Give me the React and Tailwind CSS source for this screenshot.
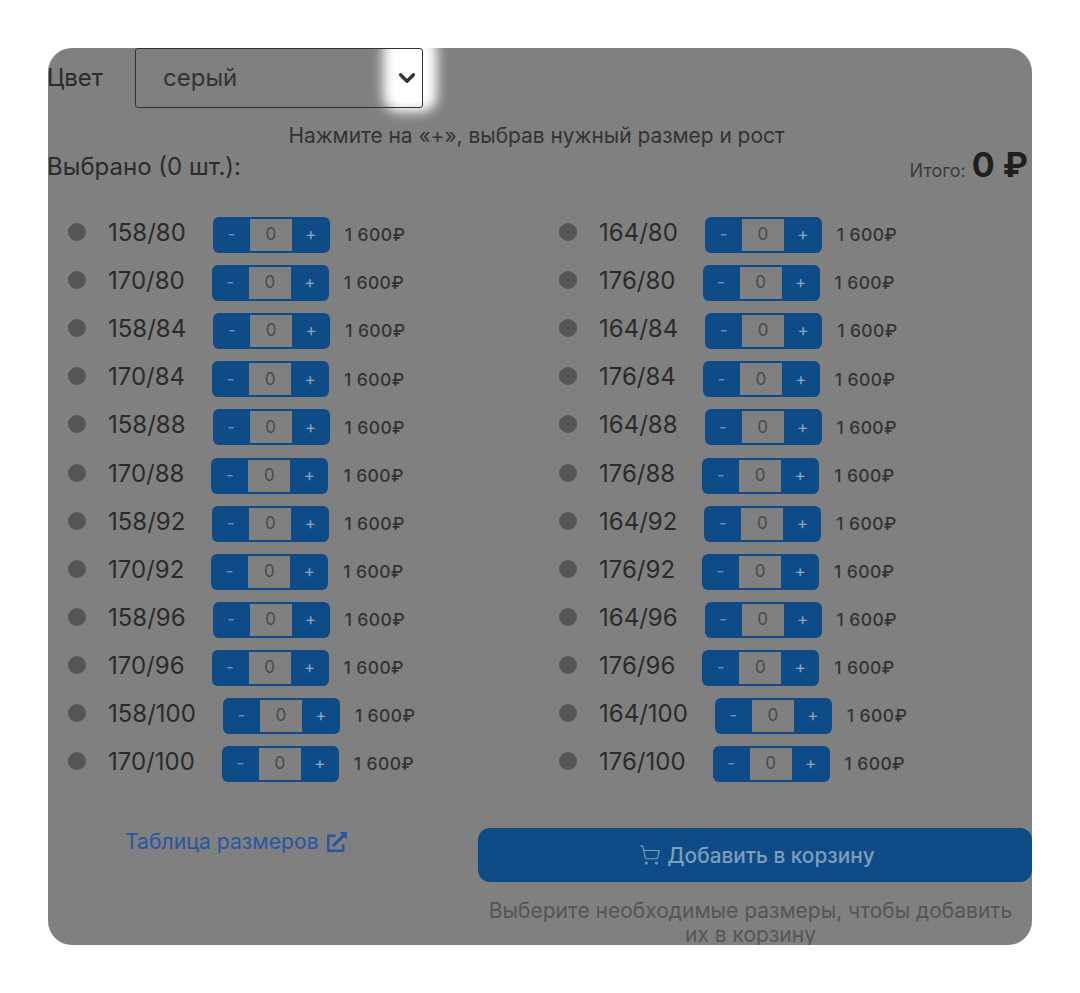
import React from "react";
import { ChevronDown, ShoppingCart } from "lucide-react";
import { FaExternalLinkAlt } from "react-icons/fa";

const heights = [80, 84, 88, 92, 96, 100];
const left = heights.flatMap((h) => [`158/${h}`, `170/${h}`]);
const right = heights.flatMap((h) => [`164/${h}`, `176/${h}`]);

function Row({ label }) {
  return (
    <div className="flex h-[48.1px] items-center">
      <span className="h-[18px] w-[18px] shrink-0 -translate-y-[3px] rounded-full bg-[#555555]" />
      <span className="ml-[22px] -translate-y-0.5 text-[24px] leading-none text-[#2b2b2b]">{label}</span>
      <div className="ml-[27px] flex h-9 w-[117px] shrink-0 overflow-hidden rounded-md bg-[#0f4c87] text-[17px]">
        <span className="flex w-[37px] items-center justify-center text-[#6f93b5]">-</span>
        <span className="my-0.5 flex w-[42px] items-center justify-center bg-[#808080] text-[#4a4a4a]">0</span>
        <span className="flex w-[38px] items-center justify-center text-[#8ba6c2]">+</span>
      </div>
      <span className="ml-[15px] text-[17.5px] font-medium leading-none tracking-[0.4px] text-[#333333]">1 600₽</span>
    </div>
  );
}

export default function App() {
  return (
    <div className="h-[993px] w-[1080px] bg-white p-12 [font-family:Inter,'Liberation_Sans',sans-serif]">
      <div className="relative h-[897px] w-[984px] overflow-hidden rounded-3xl bg-[#808080]">
        <div className="absolute left-[335px] top-[-14px] h-[78px] w-[54px] rounded-2xl bg-white blur-[6px]" />

        <div className="relative flex h-[60px] items-center">
          <span className="-ml-px text-[24px] leading-none text-[#2b2b2b]">Цвет</span>
          <div className="ml-[32px] flex h-[60px] w-[288px] items-center justify-between rounded-[3px] border border-[#333333] pl-[27px] pr-0.5">
            <span className="text-[24px] leading-none text-[#333333]">серый</span>
            <ChevronDown size={26} strokeWidth={3} className="text-[#333333]" />
          </div>
        </div>

        <p className="mt-4 pr-[7px] text-center text-[20.9px] leading-6 text-[#333333]">Нажмите на «+», выбрав нужный размер и рост</p>

        <div className="flex items-center justify-between">
          <span className="-ml-px mt-0.5 text-[24px] leading-none text-[#2b2b2b]">Выбрано (0 шт.):</span>
          <span className="mr-1 flex items-baseline gap-1.5 text-[#2b2b2b]">
            <span className="text-[18px] text-[#3a3a3a]">Итого:</span>
            <span className="text-[34px] font-bold leading-none text-[#1f1f1f]">0 ₽</span>
          </span>
        </div>

        <div className="mt-[27px] grid grid-cols-[491px_1fr] pl-5">
          <div className="flex flex-col">{left.map((l) => <Row key={l} label={l} />)}</div>
          <div className="flex flex-col">{right.map((l) => <Row key={l} label={l} />)}</div>
        </div>

        <div className="mt-[40px] flex">
          <a className="ml-[77px] mt-0 flex h-7 items-center gap-2 text-[21.2px] text-[#2a56a0]">
            Таблица размеров
            <FaExternalLinkAlt size={20} />
          </a>
          <div className="ml-auto w-[554px]">
            <button className="flex h-[54px] w-full items-center justify-center gap-1.5 rounded-xl bg-[#0f4c87] pl-1 text-[20.8px] font-medium text-[#7d9dbd]">
              <ShoppingCart size={22} strokeWidth={1.25} />
              Добавить в корзину
            </button>
            <p className="mt-[17px] pl-0 pr-[9px] text-center text-[21px] leading-6 text-[#555555]">
              Выберите необходимые размеры, чтобы добавить их в корзину
            </p>
          </div>
        </div>
      </div>
    </div>
  );
}
